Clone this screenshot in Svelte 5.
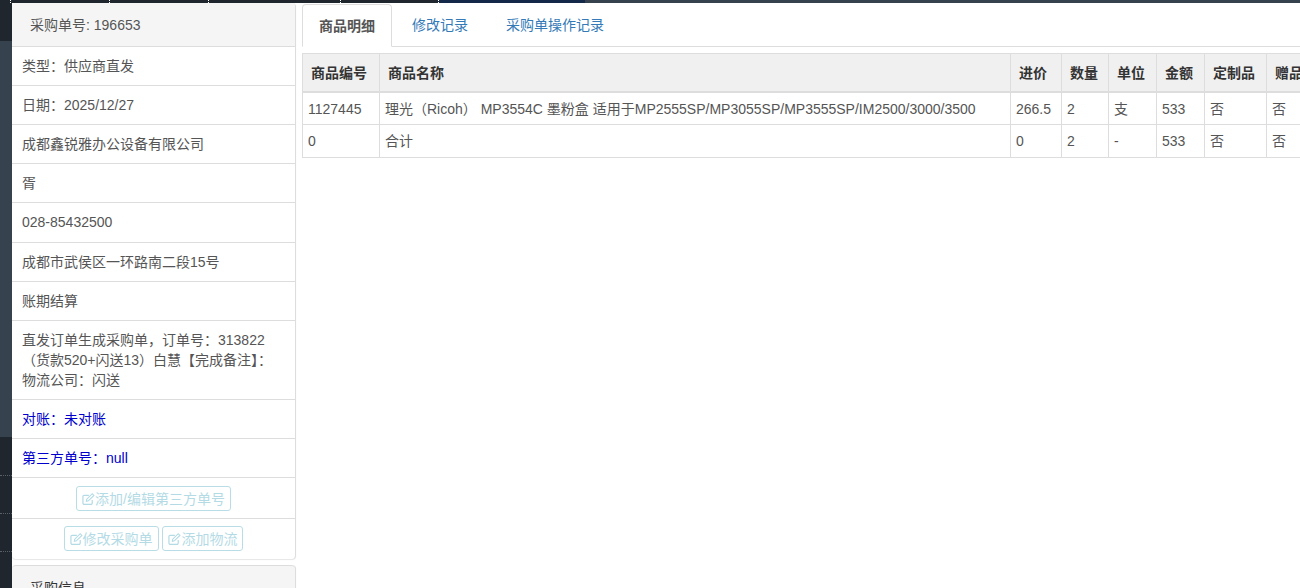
<script>
  const info = [
    { text: '类型：供应商直发' },
    { text: '日期：2025/12/27' },
    { text: '成都鑫锐雅办公设备有限公司' },
    { text: '胥' },
    { text: '028-85432500', tall: true },
    { text: '成都市武侯区一环路南二段15号' },
    { text: '账期结算' },
    { text: '直发订单生成采购单，订单号：313822（货款520+闪送13）白慧【完成备注】：物流公司：闪送' },
    { text: '对账：未对账', blue: true },
    { text: '第三方单号：null', blue: true }
  ];
  const tabs = ['商品明细', '修改记录', '采购单操作记录'];
  const cols = [
    { label: '商品编号', w: 77 },
    { label: '商品名称', w: 631 },
    { label: '进价', w: 51 },
    { label: '数量', w: 47 },
    { label: '单位', w: 48 },
    { label: '金额', w: 48 },
    { label: '定制品', w: 62 },
    { label: '赠品', w: 50 }
  ];
  const rows = [
    ['1127445', '理光（Ricoh） MP3554C 墨粉盒 适用于MP2555SP/MP3055SP/MP3555SP/IM2500/3000/3500', '266.5', '2', '支', '533', '否', '否'],
    ['0', '合计', '0', '2', '-', '533', '否', '否']
  ];
  const ticks = [11, 99, 99, 132, 98];
</script>

{#snippet editIcon()}
  <svg class="icon" viewBox="0 0 14 14" width="13" height="14">
    <path d="M11 8v3.4a1.4 1.4 0 0 1-1.4 1.4H2.4A1.4 1.4 0 0 1 1 11.4V4.4A1.4 1.4 0 0 1 2.4 3h5" fill="none" stroke="currentColor" stroke-width="1.3" />
    <path d="M4.7 9.4l.4-2.2L11 1.3l1.8 1.8-5.9 5.9z" fill="none" stroke="currentColor" stroke-width="1.2" />
  </svg>
{/snippet}

<div class="page">
  <div class="topbar">
    {#each ticks as w}
      <span class="tick" style="width: {w}px"></span>
    {/each}
    <span class="navy"></span>
  </div>
  <div class="body">
    <div class="rail">
      <span class="r1"></span>
      <span class="r2"></span>
      <span class="r3"></span>
      <span class="r3"></span>
      <span class="r3"></span>
    </div>
    <aside class="side">
      <section class="panel">
        <div class="panel-head">采购单号: 196653</div>
        <ul>
          {#each info as item}
            <li class:blue={item.blue} class:tall={item.tall}>{item.text}</li>
          {/each}
          <li class="actions">
            <button>{@render editIcon()}添加/编辑第三方单号</button>
          </li>
          <li class="actions">
            <button>{@render editIcon()}修改采购单</button>
            <button>{@render editIcon()}添加物流</button>
          </li>
        </ul>
      </section>
      <section class="panel second">
        <div class="panel-head">采购信息</div>
      </section>
    </aside>
    <main class="content">
      <nav class="tabs">
        {#each tabs as t, i}
          <span class="tab" class:active={i === 0}>{t}</span>
        {/each}
      </nav>
      <table>
        <colgroup>
          {#each cols as c}
            <col style="width: {c.w}px" />
          {/each}
        </colgroup>
        <thead>
          <tr>
            {#each cols as c}
              <th>{c.label}</th>
            {/each}
          </tr>
        </thead>
        <tbody>
          {#each rows as row}
            <tr>
              {#each row as cell}
                <td>{cell}</td>
              {/each}
            </tr>
          {/each}
        </tbody>
      </table>
    </main>
  </div>
</div>

<style>
  :global(body) {
    margin: 0;
    background: #fff;
    overflow: hidden;
  }
  .page {
    width: 1300px;
    height: 588px;
    overflow: hidden;
    font-family: "Liberation Sans", "Noto Sans CJK SC", sans-serif;
    font-size: 14px;
    line-height: 20px;
    color: #555;
  }
  .topbar {
    height: 3px;
    display: flex;
    background: #36434f;
  }
  .tick {
    box-sizing: border-box;
    background: #1f262d;
    border-right: 1px dotted #fff;
  }
  .navy {
    width: 146px;
    background: #14284a;
  }
  .body {
    display: flex;
    height: 585px;
  }
  .rail {
    width: 12px;
    flex: none;
    display: flex;
    flex-direction: column;
    background: #1f262d;
  }
  .r1 { height: 38px; flex: none; }
  .r2 { height: 396px; flex: none; background: #36434f; }
  .r3 {
    height: 37px;
    flex: none;
    border-bottom: 1px dotted #5a6066;
  }
  .r2 + .r3 { height: 38px; }
  .side {
    width: 284px;
    flex: none;
    display: flex;
    flex-direction: column;
    gap: 6px;
  }
  .panel {
    border-right: 1px solid #ddd;
    border-radius: 4px;
    box-shadow: 0 1px 1px rgba(0, 0, 0, 0.1);
    background: #fff;
  }
  .panel-head {
    height: 43px;
    padding: 12px 18px 11px;
    box-sizing: border-box;
    background: #f5f5f5;
    border-radius: 4px 4px 0 0;
  }
  .second .panel-head {
    color: #333;
    border-top: 1px solid #ddd;
  }
  ul {
    list-style: none;
    margin: 0;
    padding: 0;
  }
  li {
    padding: 9px 10px;
    border-top: 1px solid #ddd;
  }
  li.tall { padding-bottom: 10px; }
  li.blue { color: #0000cd; }
  li.actions {
    text-align: center;
    padding: 8px 10px 7px;
    line-height: 0;
  }
  li.actions + li.actions { padding: 7px 10px 8px; }
  button {
    height: 25px;
    padding: 0 5px;
    box-sizing: border-box;
    font: inherit;
    line-height: 22px;
    color: #b4dbe5;
    background: #fff;
    border: 1px solid #b9dde6;
    border-radius: 3px;
    white-space: nowrap;
    vertical-align: top;
  }
  .icon {
    vertical-align: -2px;
  }
  .content {
    flex: 1;
    min-width: 0;
    padding: 1px 0 0 6px;
  }
  .tabs {
    display: flex;
    height: 42px;
    border-bottom: 1px solid #ddd;
    margin-bottom: 6px;
  }
  .tab {
    padding: 11px 19px 0;
    color: #337ab7;
    box-sizing: border-box;
    height: 43px;
  }
  .tab.active {
    color: #555;
    font-weight: 700;
    padding: 11px 16px 0;
    margin-right: 1px;
    background: #fff;
    border: 1px solid #ddd;
    border-bottom-color: #fff;
    border-radius: 4px 4px 0 0;
  }
  table {
    border-collapse: collapse;
    table-layout: fixed;
    width: 1014px;
  }
  th, td {
    border: 1px solid #ddd;
    text-align: left;
    white-space: nowrap;
    overflow: hidden;
  }
  th {
    height: 37px;
    padding: 0 0 0 8px;
    background: #f0f0f0;
    color: #333;
    border-bottom-width: 2px;
  }
  td {
    height: 32px;
    padding: 0 5px;
  }
  tbody tr:first-child td { height: 31px; }
</style>
